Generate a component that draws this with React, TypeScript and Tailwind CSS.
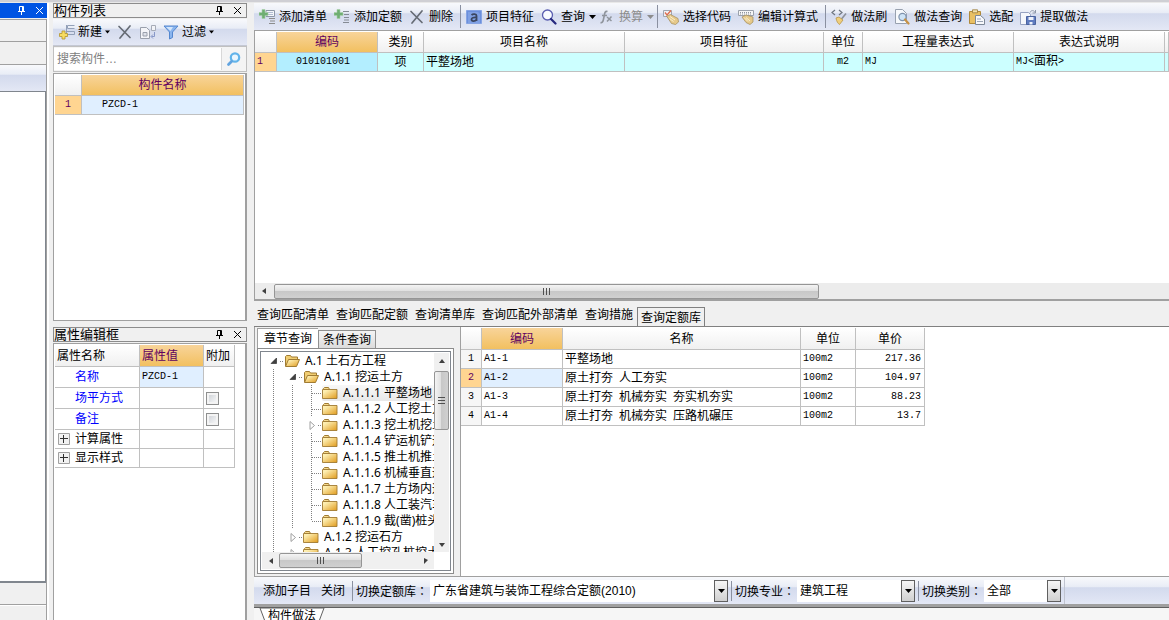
import type { ReactNode } from "react";

const TOOLBAR_BG = "bg-[linear-gradient(#f8f9fc,#e9edf6_35%,#d3daed_40%,#dfe4f3_85%,#e4e8f5)]";
const GOLD_BG = "bg-[linear-gradient(#f8d49a,#f2c060)]";
const HEAD_BG = "bg-[linear-gradient(#ffffff,#f0f0f0)]";
const CELL = "border-r border-b border-[#c0c0c0] whitespace-nowrap overflow-hidden p-0";
const MONO = "font-['Liberation_Mono','Noto_Sans_CJK_SC',monospace] text-[10px]";

type Quota = { code: string; name: string; unit: string; price: string };

const QUOTAS: Quota[] = [
  { code: "A1-1", name: "平整场地", unit: "100m2", price: "217.36" },
  { code: "A1-2", name: "原土打夯 人工夯实", unit: "100m2", price: "104.97" },
  { code: "A1-3", name: "原土打夯 机械夯实 夯实机夯实", unit: "100m2", price: "88.23" },
  { code: "A1-4", name: "原土打夯 机械夯实 压路机碾压", unit: "100m2", price: "13.7" },
];

type Guide = "line" | "tee" | "end" | "open" | "closed";
type TreeItem = { guides: Guide[]; no: string; name: string; selected?: boolean };

const TREE: TreeItem[] = [
  { guides: ["open"], no: "A.1", name: "土石方工程" },
  { guides: ["line", "open"], no: "A.1.1", name: "挖运土方" },
  { guides: ["line", "line", "tee"], no: "A.1.1.1", name: "平整场地", selected: true },
  { guides: ["line", "line", "tee"], no: "A.1.1.2", name: "人工挖土方" },
  { guides: ["line", "line", "closed"], no: "A.1.1.3", name: "挖土机挖土方" },
  { guides: ["line", "line", "tee"], no: "A.1.1.4", name: "铲运机铲运土方" },
  { guides: ["line", "line", "tee"], no: "A.1.1.5", name: "推土机推土方" },
  { guides: ["line", "line", "tee"], no: "A.1.1.6", name: "机械垂直运土方" },
  { guides: ["line", "line", "tee"], no: "A.1.1.7", name: "土方场内运输" },
  { guides: ["line", "line", "tee"], no: "A.1.1.8", name: "人工装汽车运土方" },
  { guides: ["line", "line", "end"], no: "A.1.1.9", name: "截(凿)桩头" },
  { guides: ["line", "closed"], no: "A.1.2", name: "挖运石方" },
  { guides: ["line", "closed"], no: "A.1.3", name: "人工挖孔桩挖土方" },
];

// ---------- icons ----------
function Svg({ children, w = 16, h = 16 }: { children: ReactNode; w?: number; h?: number }) {
  return (
    <svg width={w} height={h} viewBox={`0 0 ${w} ${h}`} fill="none" className="shrink-0" aria-hidden="true">
      {children}
    </svg>
  );
}

const GreenPlus = () => (
  <path d="M3 .5h3v3h3v3H6v3H3v-3H0v-3h3z" fill="#6fae73" stroke="#a9d0aa" strokeWidth=".6" />
);

const AddListIcon = () => (
  <Svg>
    <path d="M7 1.500h8.500v6H7z" fill="#f4f6fa" stroke="#8d97a8" />
    <path d="M8.500 3.500h6M8.500 5.500h6" stroke="#6f83a8" strokeDasharray="1 1" />
    <path d="M10 9.500h6M11 12h5M10 14.500h6" stroke="#8c8c8c" />
    <GreenPlus />
  </Svg>
);

const AddQuotaIcon = () => (
  <Svg>
    <path d="M9 2.500h6M10 5.500h5M10 8.500h5M10 11h5M9 13.500h6" stroke="#858b94" />
    <GreenPlus />
  </Svg>
);

const DeleteIcon = () => (
  <Svg>
    <path d="M2 2.500l11 11M13 2L3 14" stroke="#666c75" strokeWidth="1.700" strokeLinecap="round" />
  </Svg>
);

const FeatureIcon = () => (
  <Svg>
    <path d="M.5 1.500h15v13H.5z" fill="#6b8fdc" stroke="#86a4e4" />
    <path d="M2 3h10l2 2v9H2z" fill="#7fa0e4" />
    <path d="M5.500 6c1.500-1.300 5-1.200 5 .8V12M10.500 8.500c-3-.3-5 .3-5 2 0 2 3.500 2.200 5 0" stroke="#3a4660" strokeWidth="1.800" />
  </Svg>
);

const QueryIcon = () => (
  <Svg>
    <circle cx="6.500" cy="6" r="5" fill="#f8fbff" stroke="#5a5eb0" strokeWidth="1.300" />
    <path d="M10 10l4.500 4.500" stroke="#27297f" strokeWidth="2.200" strokeLinecap="round" />
  </Svg>
);

const FxIcon = () => (
  <Svg>
    <path d="M8.500 2.500C6 1.800 5.700 4 5.300 6.500L4.300 11c-.4 2-1.300 3-2.800 2.500M3 6.500h5" stroke="#8f949c" strokeWidth="1.600" />
    <path d="M8 8l4.500 4M12.500 7.500L8 12.500" stroke="#8f949c" strokeWidth="1.500" />
  </Svg>
);

const PickCodeIcon = () => (
  <Svg>
    <path d="M.5 1.500h8v6h-8z" fill="#f0f1f5" stroke="#a0a6b1" />
    <path d="M2 3.500l2 2.500 4-4.500" stroke="#df6b4c" strokeWidth="1.300" />
    <path d="M3.500 7l4-1.500 7.500 4 .5 3.500-3 2.500-4-1z" fill="#e6c98a" stroke="#a08a58" strokeWidth=".7" />
    <path d="M7 7.500l5 3.500M6.500 9.500l4 3" stroke="#fbf0cf" />
  </Svg>
);

const EditFormulaIcon = () => (
  <Svg>
    <path d="M.5 1.500h15v5H.5z" fill="#f6f6f6" stroke="#9ba1ab" />
    <path d="M2 3.500h12M2 5h12" stroke="#8e949e" strokeDasharray="1 1" />
    <path d="M4 8l4-2 7 2v5l-3 2.500-4-2z" fill="#e6c98a" stroke="#a08a58" strokeWidth=".7" />
    <path d="M8 8.500l4 3.500M6 8.500l4 4" stroke="#fbf0cf" />
  </Svg>
);

const BrushIcon = () => (
  <Svg>
    <path d="M4 1L1 3.500 4 6M8 1l3 2.500L8 6" stroke="#6f7680" strokeWidth="1.200" />
    <path d="M15 4.500L10.500 10" stroke="#8c9099" strokeWidth="1.600" />
    <path d="M5 9l3-1 4 3-3.500 4.500c-1.500-1-3-3-3.500-6.500z" fill="#efcf7e" stroke="#b99545" strokeWidth=".8" />
  </Svg>
);

const MethodQueryIcon = () => (
  <Svg>
    <path d="M1.500.5h7l4 4v10h-11z" fill="#f7f9fc" stroke="#98a1af" />
    <circle cx="8.500" cy="8" r="3.600" fill="#cfe4f6" stroke="#7f93ad" strokeWidth="1.200" />
    <path d="M11 10.500l3.500 4" stroke="#c79245" strokeWidth="2.200" strokeLinecap="round" />
  </Svg>
);

const MatchIcon = () => (
  <Svg>
    <path d="M.5 2.500h11v12H.5z" fill="#e9c064" stroke="#b08a3b" />
    <path d="M3.500.8h5v3h-5z" fill="#f4e2ae" stroke="#9a7b38" strokeWidth=".8" />
    <path d="M6.500 6.500h5l4 3.500v5.500h-9z" fill="#f7f8fb" stroke="#7d8898" />
    <path d="M8 10h4M8 12.500h6" stroke="#9ca6b6" />
  </Svg>
);

const ExtractIcon = () => (
  <Svg>
    <path d="M.5 3.500h8l2 2v10h-10z" fill="#f5f7fc" stroke="#97a3c2" />
    <path d="M6.500 7.500h9v8h-9z" fill="#5f7bc0" stroke="#4a639f" />
    <path d="M8.500 8h5v3h-5zM9.500 13h3v2.500h-3z" fill="#edf1fa" />
    <path d="M10 3.500c1-2.500 4-2.500 5 0M15.500 1v3h-3" stroke="#8d96a8" />
  </Svg>
);

const NewIcon = () => (
  <Svg>
    <path d="M15.500 1.500h-7v3h7M7.500 1v11.500M7 10.500h8.500M8 7.500h7.500v3" stroke="#93a0b8" />
    <path d="M3 7h3v2.500h2.500v3H6V15H3v-2.500H.5v-3H3z" fill="#f7dc62" stroke="#b3942f" strokeWidth=".8" />
  </Svg>
);

const CopyIcon = () => (
  <Svg>
    <path d="M.5 3.500h6l3 3v8h-9z" fill="#f3f4f8" stroke="#9aa0ac" />
    <path d="M3 8.500h4v3.500H3z" fill="#dfe2ea" stroke="#9aa0ac" />
    <path d="M11.500 1.500h4v5h-4z" fill="#f3f4f8" stroke="#a6abb6" />
    <path d="M14.500 8v4.500h-3m1.500-2l-2 2 2 2" stroke="#8797c8" />
  </Svg>
);

const FilterIcon = () => (
  <Svg>
    <path d="M1 2h14L9.500 8v5.500l-3 1.500V8z" fill="#8ab5ee" stroke="#5487cf" />
    <path d="M3 3h7L7.500 7z" fill="#d4e6fb" />
  </Svg>
);

const SearchIcon = () => (
  <Svg>
    <circle cx="9" cy="6.500" r="4.200" fill="#eaf6fe" stroke="#62b4ea" strokeWidth="2.200" />
    <path d="M5.500 10.500l-3 3" stroke="#62a4e0" strokeWidth="2.800" strokeLinecap="round" />
  </Svg>
);

const Caret = ({ w = 5 }: { w?: number }) => (
  <svg width={w} height="4" viewBox="0 0 7 4" fill="currentColor" className="shrink-0" aria-hidden="true">
    <path d="M0 0h7L3.500 4z" />
  </svg>
);

const PinIcon = () => (
  <Svg w={9} h={9}>
    <path d="M2.500 5.500V.5h4v5M5.500 1v4.500M1 5.500h7M4.500 6v3" stroke="currentColor" />
  </Svg>
);

const CloseIcon = () => (
  <Svg w={9} h={9}>
    <path d="M1 1l7 7M8 1L1 8" stroke="currentColor" />
  </Svg>
);

function FolderIcon({ open }: { open?: boolean }) {
  return (
    <Svg>
      <defs>
        <linearGradient id="folder" x1="0" y1="0" x2="1" y2="1">
          <stop offset=".2" stopColor="#fdeeb0" />
          <stop offset="1" stopColor="#e09a1c" />
        </linearGradient>
      </defs>
      {open ? (
        <>
          <path d="M1.500 13V3.500l1-1h4l1 1.500h6v3" fill="#f0cd72" stroke="#a07b32" />
          <path d="M1.500 13.500l3-7h11l-3 7z" fill="url(#folder)" stroke="#a07b32" />
        </>
      ) : (
        <>
          <path d="M1.500 4.500v-1l1-1h4l1 2z" fill="#f5da8c" stroke="#a07b32" />
          <path d="M.5 4.500h14.500v9H.5z" fill="url(#folder)" stroke="#a07b32" strokeWidth=".9" />
        </>
      )}
    </Svg>
  );
}

function TreeGuide({ kind }: { kind: Guide }) {
  const dots = { stroke: "#808080", strokeDasharray: "1 1" };
  return (
    <Svg w={19}>
      {(kind === "line" || kind === "tee") && <path d="M8.500 0v16" {...dots} />}
      {kind === "end" && <path d="M8.500 0v8" {...dots} />}
      {(kind === "tee" || kind === "end") && <path d="M9 8.500h10" {...dots} />}
      {(kind === "open" || kind === "closed") && <path d="M15 8.500h4" {...dots} />}
      {kind === "open" && <path d="M11.500 5v5.500H6z" fill="#404040" stroke="#202020" strokeWidth=".6" />}
      {kind === "closed" && <path d="M7 4.500v8l4.500-4z" fill="#fff" stroke="#a0a0a0" />}
    </Svg>
  );
}

// ---------- building blocks ----------
function ToolButton({ icon, label, menu, disabled }: { icon: ReactNode; label: string; menu?: boolean; disabled?: boolean }) {
  return (
    <button
      type="button"
      disabled={disabled}
      className={`flex shrink-0 items-center gap-1 whitespace-nowrap ${menu ? "mr-[3px]" : "mr-[7px]"} ${disabled ? "text-[#8c8c8c]" : "text-black"}`}
    >
      {icon}
      {label}
      {menu && <Caret w={7} />}
    </button>
  );
}

const Separator = () => <div className="mr-[5px] h-[23px] w-px shrink-0 bg-[#8a90a0]" />;

function PanelTitle({ title }: { title: string }) {
  return (
    <div className="flex h-[15px] shrink-0 items-center border border-[#8c8c8c] bg-[#f0f0f0] pr-1">
      <h2 className="flex-1 text-[13px] leading-[13px] whitespace-nowrap">{title}</h2>
      <button type="button" aria-label="固定" className="mr-[9px]"><PinIcon /></button>
      <button type="button" aria-label="关闭"><CloseIcon /></button>
    </div>
  );
}

function ScrollArrow({ dir }: { dir: "left" | "right" | "up" | "down" }) {
  const d = { left: "M6 1v6L2 4z", right: "M2 1v6l4-4z", up: "M1 6h6L4 2z", down: "M1 2h6L4 6z" }[dir];
  return (
    <span className="grid h-[15px] w-[17px] shrink-0 place-items-center">
      <Svg w={8} h={8}><path d={d} fill="#404040" /></Svg>
    </span>
  );
}

function Picker({ id, label, value, width }: { id: string; label: string; value: string; width: string }) {
  return (
    <>
      <label htmlFor={id} className="shrink-0 font-['Noto_Sans_CJK_TC',sans-serif] whitespace-nowrap">{label}</label>
      <div className={`relative ml-0.5 mr-[3px] h-[22px] shrink-0 ${width}`}>
        <select id={id} className="h-full w-full appearance-none bg-white pl-[3px] pr-4 outline-none">
          <option>{value}</option>
        </select>
        <span className="pointer-events-none absolute inset-y-0 right-0 grid w-[14px] place-items-center border border-[#606060] bg-[linear-gradient(#f6f6f6,#d0d0d0)]">
          <Caret w={7} />
        </span>
      </div>
    </>
  );
}

// ---------- panels ----------
function LeftStub() {
  return (
    <aside className="flex w-[49px] shrink-0 flex-col border-r-2 border-white">
      <div className="flex h-[15px] items-center justify-end gap-[9px] bg-[#0054e3] pr-[3px] text-white">
        <button type="button" aria-label="固定"><PinIcon /></button>
        <button type="button" aria-label="关闭"><CloseIcon /></button>
      </div>
      <div className="mt-px flex flex-1 flex-col border-r border-[#a0a0a0]">
        <div className="h-[23px] border-y border-[#a0a0a0]" />
        <div className="h-[23px] border-b border-[#a0a0a0]" />
        <div className={`h-[26px] ${TOOLBAR_BG}`} />
        <div className="flex-1 border-t border-r border-b-2 border-[#80868e] bg-white" />
        <div className="h-[22px] border-b border-[#a0a0a0]" />
        <div className="h-[15px] border-t border-white" />
      </div>
    </aside>
  );
}

function ComponentList() {
  return (
    <>
      <PanelTitle title="构件列表" />
      <div className={`mt-px flex h-[27px] shrink-0 items-center gap-[7px] border-b border-[#c4c8d4] pl-1.5 ${TOOLBAR_BG}`}>
        <button type="button" className="flex items-center gap-[3px] whitespace-nowrap"><NewIcon />新建<Caret /></button>
        <button type="button" aria-label="删除"><DeleteIcon /></button>
        <button type="button" aria-label="复制"><CopyIcon /></button>
        <button type="button" className="flex items-center gap-[3px] whitespace-nowrap"><FilterIcon />过滤<Caret /></button>
      </div>
      <div className="flex h-[26px] shrink-0 items-center border border-[#c0c0c0] bg-[#f4f4f4]">
        <input aria-label="搜索构件" placeholder="搜索构件…" className="h-[22px] min-w-0 flex-1 border-r border-[#d8d8d8] bg-white pl-[3px] outline-none placeholder:text-[#808080]" />
        <button type="button" aria-label="搜索" className="grid w-6 place-items-center"><SearchIcon /></button>
      </div>
      <div className="mt-px h-[248px] shrink-0 border border-r-2 border-[#a0a0a0] bg-white p-px">
        <table className="w-[189px] table-fixed border-separate border-spacing-0">
          <colgroup><col className="w-[27px]" /><col /></colgroup>
          <thead>
            <tr className="h-[21px]">
              <th className={`${CELL} ${HEAD_BG}`} />
              <th className={`${CELL} ${GOLD_BG} font-normal text-[#600060]`}>构件名称</th>
            </tr>
          </thead>
          <tbody>
            <tr className="h-[19px]">
              <td className={`${CELL} ${MONO} bg-[#ffd591] text-center text-[#600060]`}>1</td>
              <td className={`${CELL} ${MONO} bg-[#e0efff] pl-5`}>PZCD-1</td>
            </tr>
          </tbody>
        </table>
      </div>
    </>
  );
}

function PropertyEditor() {
  const rows = [
    { name: "名称", value: "PZCD-1" },
    { name: "场平方式", check: true },
    { name: "备注", check: true },
  ];
  return (
    <>
      <div className="mt-1.5"><PanelTitle title="属性编辑框" /></div>
      <div className="mt-px min-h-0 flex-1 border border-b-0 border-r-2 border-[#a0a0a0] bg-white p-px">
        <table className="w-[180px] table-fixed border-separate border-spacing-0">
          <colgroup><col className="w-[85px]" /><col className="w-16" /><col /></colgroup>
          <thead>
            <tr className="h-[22px]">
              <th className={`${CELL} ${HEAD_BG} pl-0.5 text-left font-normal`}>属性名称</th>
              <th className={`${CELL} ${GOLD_BG} pl-0.5 text-left font-normal text-[#600060]`}>属性值</th>
              <th className={`${CELL} ${HEAD_BG} pl-0.5 text-left font-normal`}>附加</th>
            </tr>
          </thead>
          <tbody>
            {rows.map((r) => (
              <tr key={r.name} className="h-[21px]">
                <td className={`${CELL} pl-5 text-[#0000ff]`}>{r.name}</td>
                <td className={`${CELL} ${MONO} pl-0.5 ${r.value ? "bg-[#e0efff]" : ""}`}>{r.value}</td>
                <td className={`${CELL} pl-0.5`}>
                  {r.check && (
                    <input
                      type="checkbox"
                      aria-label={`${r.name}附加`}
                      className="block h-[13px] w-[13px] appearance-none border border-[#8e8f8f] bg-[linear-gradient(135deg,#c8ccd2,#ffffff)] shadow-[inset_0_0_0_2px_#f4f4f4]"
                    />
                  )}
                </td>
              </tr>
            ))}
            {["计算属性", "显示样式"].map((name) => (
              <tr key={name} className="h-[19px]">
                <td className={`${CELL} pl-[3px]`}>
                  <button type="button" className="flex h-[18px] items-center gap-[5px]">
                    <Svg w={12} h={12}>
                      <path d="M.5.5h11v11H.5z" fill="#f2f2f2" stroke="#a0a0a0" />
                      <path d="M2 5.500h8M5.500 2v8" stroke="#303030" />
                    </Svg>
                    {name}
                  </button>
                </td>
                <td className={CELL} />
                <td className={CELL} />
              </tr>
            ))}
          </tbody>
        </table>
      </div>
    </>
  );
}

function MainToolbar() {
  return (
    <div className={`flex h-[27px] shrink-0 items-center overflow-hidden pl-[5px] ${TOOLBAR_BG}`}>
      <ToolButton icon={<AddListIcon />} label="添加清单" />
      <ToolButton icon={<AddQuotaIcon />} label="添加定额" />
      <ToolButton icon={<DeleteIcon />} label="删除" />
      <Separator />
      <ToolButton icon={<FeatureIcon />} label="项目特征" />
      <ToolButton icon={<QueryIcon />} label="查询" menu />
      <ToolButton icon={<FxIcon />} label="换算" menu disabled />
      <Separator />
      <ToolButton icon={<PickCodeIcon />} label="选择代码" />
      <ToolButton icon={<EditFormulaIcon />} label="编辑计算式" />
      <Separator />
      <ToolButton icon={<BrushIcon />} label="做法刷" />
      <ToolButton icon={<MethodQueryIcon />} label="做法查询" />
      <ToolButton icon={<MatchIcon />} label="选配" />
      <ToolButton icon={<ExtractIcon />} label="提取做法" />
    </div>
  );
}

function BillGrid() {
  const heads = ["类别", "项目名称", "项目特征", "单位", "工程量表达式", "表达式说明"];
  return (
    <div className="flex h-[271px] shrink-0 flex-col border-t border-b-2 border-l border-[#a0a0a0] bg-white pt-px">
      <div className="min-h-0 flex-1 overflow-hidden">
        <table className="w-full table-fixed border-separate border-spacing-0">
          <colgroup>
            <col className="w-[22px]" />
            <col className="w-[101px]" />
            <col className="w-[46px]" />
            <col className="w-[201px]" />
            <col className="w-[199px]" />
            <col className="w-[39px]" />
            <col className="w-[151px]" />
            <col className="w-[151px]" />
            <col />
          </colgroup>
          <thead>
            <tr className="h-[21px]">
              <th className={`${CELL} ${HEAD_BG}`} />
              <th className={`${CELL} ${GOLD_BG} font-normal text-[#600060]`}>编码</th>
              {heads.map((h) => (
                <th key={h} className={`${CELL} ${HEAD_BG} font-normal`}>{h}</th>
              ))}
              <th className={`${CELL} ${HEAD_BG}`} />
            </tr>
          </thead>
          <tbody>
            <tr className="h-[19px] bg-[#ccffff]">
              <td className={`${CELL} ${MONO} bg-[#ffd591] pl-0.5 text-[#600060]`}>1</td>
              <td className={`${CELL} ${MONO} bg-[#b3eeff] pr-2 text-center`}>010101001</td>
              <td className={`${CELL} text-center`}>项</td>
              <td className={`${CELL} pl-0.5`}>平整场地</td>
              <td className={CELL} />
              <td className={`${CELL} ${MONO} text-center`}>m2</td>
              <td className={`${CELL} ${MONO} pl-0.5`}>MJ</td>
              <td className={`${CELL} ${MONO} pl-0.5`}>
                <span className="flex items-center">MJ&lt;<span className="text-xs leading-4">面积</span>&gt;</span>
              </td>
              <td className={CELL} />
            </tr>
          </tbody>
        </table>
      </div>
      <div className="flex h-4 shrink-0 items-center bg-[#ececec]">
        <ScrollArrow dir="left" />
        <div className="ml-0.5 grid h-[15px] w-[545px] place-items-center rounded-xs border border-[#959595] bg-[linear-gradient(#f4f4f4,#e0e0e0_45%,#c8c8c8_50%,#d0d0d0)]">
          <Svg w={9} h={7}><path d="M1.500 0v7M4.500 0v7M7.500 0v7" stroke="#505050" /></Svg>
        </div>
      </div>
    </div>
  );
}

function QueryTabs() {
  const tabs = ["查询匹配清单", "查询匹配定额", "查询清单库", "查询匹配外部清单", "查询措施"];
  return (
    <div role="tablist" className="flex h-[26px] shrink-0 items-end border-b border-[#808080] pl-[3px]">
      {tabs.map((t) => (
        <button key={t} type="button" role="tab" className="mr-[7px] h-[22px] whitespace-nowrap leading-[22px]">{t}</button>
      ))}
      <button type="button" role="tab" aria-selected="true" className="-ml-[3px] h-[19px] border border-b-0 border-[#808080] px-[3px] leading-5 whitespace-nowrap">
        查询定额库
      </button>
    </div>
  );
}

function ChapterTree() {
  return (
    <div className="flex w-[205px] shrink-0 flex-col pt-px pr-1.5 pb-0.5 pl-0.5">
      <div role="tablist" className="flex h-5 shrink-0 items-end">
        <button type="button" role="tab" aria-selected="true" className="h-5 border-t border-l border-[#a0a0a0] bg-white px-1.5 leading-5 whitespace-nowrap">章节查询</button>
        <button type="button" role="tab" className="h-[18px] border border-b-0 border-[#909090] bg-[linear-gradient(#f4f4f4,#dcdcdc)] px-1 leading-[18px] whitespace-nowrap">条件查询</button>
      </div>
      <div className="min-h-0 flex-1 border border-[#8c8c8c] bg-white p-0.5">
        <div className="flex h-full flex-col border border-[#80868e] p-px">
          <div className="flex min-h-0 flex-1">
            <ul className="min-w-0 flex-1 overflow-hidden pl-[3px] font-['Noto_Sans','Noto_Sans_CJK_SC',sans-serif]">
              {TREE.map((n) => (
                <li key={n.no} className="flex h-4 items-center whitespace-nowrap leading-4">
                  {n.guides.map((g, i) => <TreeGuide key={i} kind={g} />)}
                  <span className={`flex h-4 flex-1 items-center gap-[5px] ${n.selected ? "rounded-xs bg-[linear-gradient(#f8f8f8,#e8e8e8)]" : ""}`}>
                    <FolderIcon open={n.guides[n.guides.length - 1] === "open"} />
                    <span>{n.no} {n.name}</span>
                  </span>
                </li>
              ))}
            </ul>
            <div className="flex w-[15px] shrink-0 flex-col items-center bg-[#f0f0f0]">
              <ScrollArrow dir="up" />
              <div className="mt-[3px] grid h-[59px] w-[15px] place-items-center rounded-xs border border-[#959595] bg-[linear-gradient(90deg,#f4f4f4,#e0e0e0_45%,#c8c8c8_50%,#d0d0d0)]">
                <Svg w={7} h={9}><path d="M0 1.500h7M0 4.500h7M0 7.500h7" stroke="#505050" /></Svg>
              </div>
              <div className="flex-1" />
              <ScrollArrow dir="down" />
            </div>
          </div>
          <div className="mr-[15px] flex h-[17px] shrink-0 items-center bg-[#f0f0f0]">
            <ScrollArrow dir="left" />
            <div className="grid h-[15px] w-[83px] place-items-center rounded-xs border border-[#959595] bg-[linear-gradient(#f4f4f4,#e0e0e0_45%,#c8c8c8_50%,#d0d0d0)]">
              <Svg w={9} h={7}><path d="M1.500 0v7M4.500 0v7M7.500 0v7" stroke="#505050" /></Svg>
            </div>
            <div className="flex-1" />
            <ScrollArrow dir="right" />
          </div>
        </div>
      </div>
    </div>
  );
}

function QuotaGrid() {
  return (
    <div className="min-w-0 flex-1 overflow-hidden border-l border-[#a0a0a0] bg-white pt-px">
      <table className="w-[464px] table-fixed border-separate border-spacing-0">
        <colgroup>
          <col className="w-[21px]" />
          <col className="w-[81px]" />
          <col className="w-[238px]" />
          <col className="w-[55px]" />
          <col className="w-[69px]" />
        </colgroup>
        <thead>
          <tr className="h-[22px]">
            <th className={`${CELL} ${HEAD_BG}`} />
            <th className={`${CELL} ${GOLD_BG} font-normal text-[#600060]`}>编码</th>
            <th className={`${CELL} ${HEAD_BG} font-normal`}>名称</th>
            <th className={`${CELL} ${HEAD_BG} font-normal`}>单位</th>
            <th className={`${CELL} ${HEAD_BG} font-normal`}>单价</th>
          </tr>
        </thead>
        <tbody>
          {QUOTAS.map((q, i) => {
            const active = i === 1;
            return (
              <tr key={q.code} className="h-[19px]">
                <td className={`${CELL} ${MONO} text-center ${active ? "bg-[#ffd591] text-[#600060]" : "bg-[#f6f6f6]"}`}>{i + 1}</td>
                <td className={`${CELL} ${MONO} pl-0.5 ${active ? "bg-[#e0efff]" : ""}`}>{q.code}</td>
                <td className={`${CELL} pl-0.5`}>
                  <span className="flex gap-1.5">{q.name.split(" ").map((part) => <span key={part}>{part}</span>)}</span>
                </td>
                <td className={`${CELL} ${MONO} pl-0.5`}>{q.unit}</td>
                <td className={`${CELL} ${MONO} pr-[3px] text-right`}>{q.price}</td>
              </tr>
            );
          })}
        </tbody>
      </table>
    </div>
  );
}

function BottomBar() {
  return (
    <div className={`flex h-7 shrink-0 items-center overflow-hidden border-t border-[#a0a0a0] pl-[9px] ${TOOLBAR_BG}`}>
      <button type="button" className="mr-2.5 shrink-0 whitespace-nowrap">添加子目</button>
      <button type="button" className="mr-[7px] shrink-0 whitespace-nowrap">关闭</button>
      <div className="mr-[3px] h-5 w-px shrink-0 bg-[#8a90a0]" />
      <Picker id="quota-lib" label="切换定额库：" value="广东省建筑与装饰工程综合定额(2010)" width="w-[298px]" />
      <div className="mr-[3px] h-5 w-px shrink-0 bg-[#8a90a0]" />
      <Picker id="major" label="切换专业：" value="建筑工程" width="w-[118px]" />
      <div className="mr-[3px] h-5 w-px shrink-0 bg-[#8a90a0]" />
      <Picker id="category" label="切换类别：" value="全部" width="w-[77px]" />
      <div className="h-full w-px shrink-0 bg-[#c0c4d0]" />
    </div>
  );
}

export default function App() {
  return (
    <div className="flex h-screen w-full flex-col overflow-hidden bg-[#f0f0f0] font-['Liberation_Sans','Noto_Sans_CJK_SC',sans-serif] text-xs leading-4 text-black">
      <div className="h-[3px] shrink-0 border-b border-[#e8e8e8] bg-[#cfcfd4]" />
      <div className="flex min-h-0 flex-1">
        <LeftStub />
        <div className="ml-1 flex w-[194px] shrink-0 flex-col">
          <ComponentList />
          <PropertyEditor />
        </div>
        <main className="ml-[7px] flex min-w-0 flex-1 flex-col">
          <MainToolbar />
          <BillGrid />
          <QueryTabs />
          <div className="flex min-h-0 flex-1 border-l border-[#a0a0a0]">
            <ChapterTree />
            <QuotaGrid />
          </div>
          <BottomBar />
          <div className="h-1 shrink-0 border-b border-[#606060] bg-[#a0a0a0]" />
          <div className="flex h-3 shrink-0 overflow-hidden bg-[#f6f6f6] pl-[5px]">
            <button type="button" className="relative h-4 w-[66px] whitespace-nowrap leading-4">
              <svg width="66" height="16" viewBox="0 0 66 16" className="absolute inset-0" aria-hidden="true">
                <path d="M1 0l6 16h52l6-16z" fill="#fff" stroke="#606060" />
              </svg>
              <span className="relative">构件做法</span>
            </button>
          </div>
        </main>
      </div>
    </div>
  );
}
